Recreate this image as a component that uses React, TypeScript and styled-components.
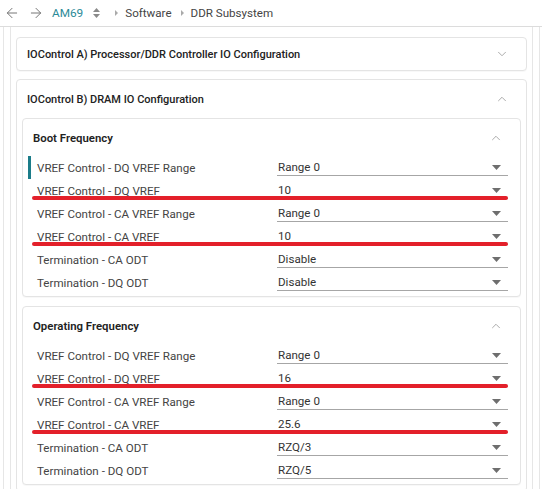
import React from 'react';
import styled, { createGlobalStyle } from 'styled-components';
import { ArrowLeft, ArrowRight, ChevronDown, ChevronUp } from 'lucide-react';

const Global = createGlobalStyle`
  html, body { margin: 0; padding: 0; background: #fff; }
  body { font-family: Roboto, 'Liberation Sans', sans-serif; color: #333; }
`;

/* ─── top bar ─── */
const TopBar = styled.div`
  height: 25px;
  padding-bottom: 1px;
  border-bottom: 1px solid #dcdcdc;
  display: flex;
  align-items: center;
  padding-left: 4px;
  font-size: 11.6px;
  color: #444;
`;

const NavBtn = styled.span`
  display: inline-flex;
  color: #777;
  margin-right: 8px;
`;

const Device = styled.span`
  color: #2b8a98;
  font-size: 11.8px;
`;

const SortIcon = styled.svg`
  margin: 0 15px 0 10px;
`;

const Crumb = styled.span`
  color: #444;
  font-size: 11.6px;
`;

const CrumbSep = styled.svg<{ $lead?: number }>`
  margin: 0 7px 0 ${p => p.$lead ?? 0}px;
`;

/* ─── frames ─── */
const Outer = styled.div`
  margin: 0 2px 0 3px;
  border-left: 1px solid #e6e6e6;
  border-right: 1px solid #e6e6e6;
  padding: 0 6px;
`;

const Inner = styled.div`
  border-left: 1px solid #e6e6e6;
  border-right: 1px solid #e6e6e6;
  padding: 10px 5px 0 5px;
  display: flex;
  flex-direction: column;
  gap: 8px;
`;

/* ─── accordion cards ─── */
const Card = styled.div`
  border: 1px solid #e4e4e4;
  border-radius: 4px;
  background: #fff;
  box-shadow: 0 1px 1px rgba(0,0,0,0.03);
`;

const CardHead = styled.div<{ $h: number }>`
  height: ${p => p.$h}px;
  display: flex;
  align-items: center;
  justify-content: space-between;
  padding: 0 17px 0 10px;
`;

const CardTitle = styled.span`
  font-size: 11px;
  font-weight: 500;
  color: #222;
`;

const CardBody = styled.div`
  padding: 0 5px 6px 5px;
  display: flex;
  flex-direction: column;
  gap: 9px;
`;

const SubHead = styled.div`
  height: 37px;
  display: flex;
  align-items: center;
  justify-content: space-between;
  padding: 1px 17px 0 10px;
  box-sizing: border-box;
`;

const SubTitle = styled.span`
  font-size: 11.4px;
  font-weight: 600;
  color: #222;
`;

const Chevron = styled.span`
  display: inline-flex;
  color: #999;
`;

const Rows = styled.div`
  padding-bottom: 2px;
`;

const Row = styled.div`
  position: relative;
  height: 23px;
  display: grid;
  grid-template-columns: 249px 231px;
  align-items: center;
  padding-left: 5px;
`;

const Label = styled.div<{ $active?: boolean }>`
  height: 100%;
  display: flex;
  align-items: center;
  font-size: 11.6px;
  color: #444;
  border-left: 3px solid ${p => (p.$active ? '#1b7c89' : 'transparent')};
  padding-left: 6px;
`;

const Select = styled.div`
  align-self: start;
  height: 20px;
  box-sizing: border-box;
  padding: 3px 7px 0 1px;
  border-bottom: 1px solid #a6a6a6;
  display: flex;
  align-items: center;
  justify-content: space-between;
  font-size: 11.6px;
  color: #333;
`;

const Mark = styled.div`
  position: absolute;
  left: 9px;
  right: 12px;
  bottom: 2px;
  height: 4px;
  border-radius: 2px;
  background: #e3202a;
`;

type RowData = { label: string; value: string; marked?: boolean };

const Caret = () => (
  <svg width="9" height="5" viewBox="0 0 9 5">
    <path d="M0 0 L9 0 L4.5 5 Z" fill="#6e6e6e" />
  </svg>
);

const Section: React.FC<{ title: string; rows: RowData[]; activeFirst?: boolean }> = ({ title, rows, activeFirst }) => (
  <Card>
    <SubHead>
      <SubTitle>{title}</SubTitle>
      <Chevron><ChevronUp size={14} strokeWidth={1.4} /></Chevron>
    </SubHead>
    <Rows>
      {rows.map((r, i) => (
        <Row key={r.label}>
          <Label $active={activeFirst && i === 0}>{r.label}</Label>
          <Select>
            <span>{r.value}</span>
            <Caret />
          </Select>
          {r.marked && <Mark />}
        </Row>
      ))}
    </Rows>
  </Card>
);

const boot: RowData[] = [
  { label: 'VREF Control - DQ VREF Range', value: 'Range 0' },
  { label: 'VREF Control - DQ VREF', value: '10', marked: true },
  { label: 'VREF Control - CA VREF Range', value: 'Range 0' },
  { label: 'VREF Control - CA VREF', value: '10', marked: true },
  { label: 'Termination - CA ODT', value: 'Disable' },
  { label: 'Termination - DQ ODT', value: 'Disable' },
];

const operating: RowData[] = [
  { label: 'VREF Control - DQ VREF Range', value: 'Range 0' },
  { label: 'VREF Control - DQ VREF', value: '16', marked: true },
  { label: 'VREF Control - CA VREF Range', value: 'Range 0' },
  { label: 'VREF Control - CA VREF', value: '25.6', marked: true },
  { label: 'Termination - CA ODT', value: 'RZQ/3' },
  { label: 'Termination - DQ ODT', value: 'RZQ/5' },
];

const Sep: React.FC<{ lead?: number }> = ({ lead }) => (
  <CrumbSep $lead={lead} width="3" height="6" viewBox="0 0 3 6">
    <path d="M0 0 L3 3 L0 6 Z" fill="#aaa" />
  </CrumbSep>
);

export default function App() {
  return (
    <>
      <Global />
      <TopBar>
        <NavBtn><ArrowLeft size={16} strokeWidth={1.5} /></NavBtn>
        <NavBtn><ArrowRight size={16} strokeWidth={1.5} /></NavBtn>
        <Device>AM69</Device>
        <SortIcon width="7" height="10" viewBox="0 0 7 10">
          <path d="M0 4 L3.5 0 L7 4 Z M0 6 L3.5 10 L7 6 Z" fill="#8a8a8a" />
        </SortIcon>
        <Sep />
        <Crumb>Software</Crumb>
        <Sep lead={9} />
        <Crumb>DDR Subsystem</Crumb>
      </TopBar>
      <Outer>
        <Inner>
          <Card>
            <CardHead $h={32}>
              <CardTitle>IOControl A) Processor/DDR Controller IO Configuration</CardTitle>
              <Chevron><ChevronDown size={14} strokeWidth={1.4} /></Chevron>
            </CardHead>
          </Card>
          <Card>
            <CardHead $h={38}>
              <CardTitle>IOControl B) DRAM IO Configuration</CardTitle>
              <Chevron><ChevronUp size={14} strokeWidth={1.4} /></Chevron>
            </CardHead>
            <CardBody>
              <Section title="Boot Frequency" rows={boot} activeFirst />
              <Section title="Operating Frequency" rows={operating} />
            </CardBody>
          </Card>
        </Inner>
      </Outer>
    </>
  );
}
